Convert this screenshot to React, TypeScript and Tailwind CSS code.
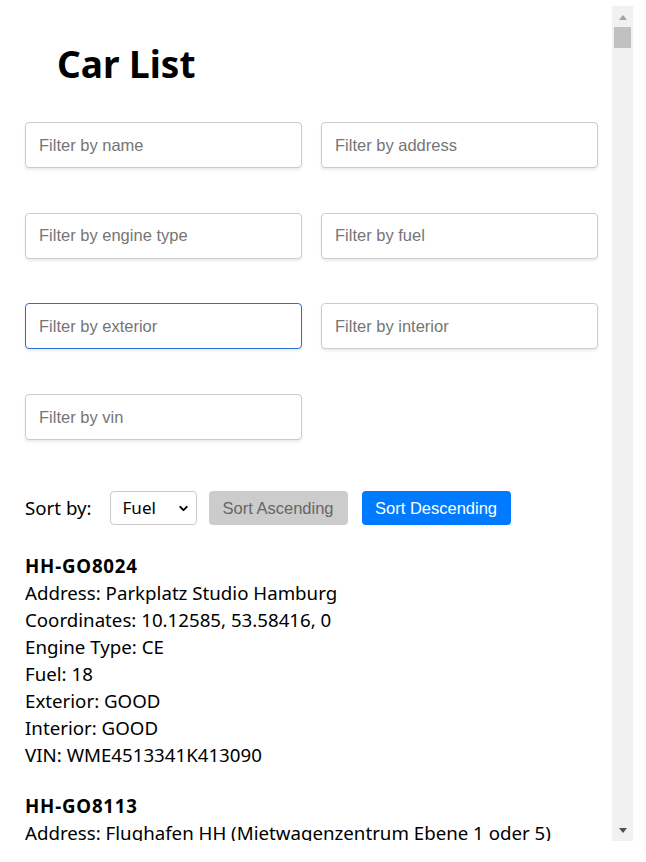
import { useState } from 'react';
import { ChevronDown } from 'lucide-react';

type Car = {
  name: string;
  address: string;
  coordinates: [number, number, number];
  engineType: string;
  fuel: number;
  exterior: string;
  interior: string;
  vin: string;
};

const firstCars: Car[] = [
  {
    name: 'HH-GO8024',
    address: 'Parkplatz Studio Hamburg',
    coordinates: [10.12585, 53.58416, 0],
    engineType: 'CE',
    fuel: 18,
    exterior: 'GOOD',
    interior: 'GOOD',
    vin: 'WME4513341K413090',
  },
  {
    name: 'HH-GO8113',
    address: 'Flughafen HH (Mietwagenzentrum Ebene 1 oder 5)',
    coordinates: [9.99622, 53.63264, 0],
    engineType: 'CE',
    fuel: 17,
    exterior: 'GOOD',
    interior: 'GOOD',
    vin: 'WME4513341K412880',
  },
];

const streets = ['Lesserstraße', 'Grosse Reichenstraße', 'Spitalerstraße', 'Bramfelder Chaussee', 'Wandsbeker Marktstraße', 'Eppendorfer Weg'];

// filler so the list scrolls like the real one
const moreCars: Car[] = Array.from({ length: 129 }, (_, i) => ({
  name: `HH-GO${8200 + i * 7}`,
  address: `${streets[i % streets.length]} ${(i % 90) + 1}, 22${(100 + i) % 999} Hamburg`,
  coordinates: [9.9 + (i % 30) / 100, 53.5 + (i % 20) / 100, 0],
  engineType: 'CE',
  fuel: Math.max(1, 16 - (i % 16)),
  exterior: i % 5 === 0 ? 'UNACCEPTABLE' : 'GOOD',
  interior: i % 7 === 0 ? 'UNACCEPTABLE' : 'GOOD',
  vin: `WME45133${41000 + i}K4${13000 + i}`,
}));

const cars = [...firstCars, ...moreCars];

const filters = ['name', 'address', 'engine type', 'fuel', 'exterior', 'interior', 'vin'];

export default function App() {
  const [sortKey, setSortKey] = useState('fuel');

  return (
    <div className="h-[862px] bg-white">
      <div className="relative mt-[6px] h-[835px] w-[633px]">
        <div className="h-full w-full overflow-y-auto pr-[21px] font-['Noto_Sans',sans-serif] text-black">
          <h1 className="mt-[36px] pl-[57px] text-[37px] font-bold leading-[44px]">Car List</h1>

          <div className="mt-[36px] grid grid-cols-[277px_277px] gap-x-[19px] gap-y-[44.7px] pl-[25px]">
            {filters.map((f) => (
              <input
                key={f}
                placeholder={`Filter by ${f}`}
                className={`h-[46px] w-full rounded-[4px] border bg-white px-[13px] font-['Liberation_Sans',Arial,sans-serif] text-[16.5px] shadow-[0_2px_3px_rgba(0,0,0,0.08)] outline-none placeholder:text-[#757575] ${
                  f === 'exterior' ? 'border-[#2a6fd6]' : 'border-[#cccccc]'
                }`}
              />
            ))}
          </div>

          <div className="mt-[51px] flex h-[34px] items-center pl-[25px]">
            <span className="mr-[18px] text-[18.7px]">Sort by:</span>
            <div className="relative mr-[12px]">
              <select
                value={sortKey}
                onChange={(e) => setSortKey(e.target.value)}
                className="h-[34px] w-[87px] appearance-none rounded-[4px] border border-[#cccccc] bg-white pl-[12px] text-[17px] outline-none"
              >
                <option value="name">Name</option>
                <option value="fuel">Fuel</option>
                <option value="vin">VIN</option>
              </select>
              <ChevronDown className="pointer-events-none absolute right-[7px] top-[11px] h-[13px] w-[13px]" strokeWidth={3.5} />
            </div>
            <button className="mr-[14px] h-[34px] w-[139px] rounded-[4px] bg-[#cccccc] font-['Liberation_Sans',Arial,sans-serif] text-[16.5px] text-[#666666]">
              Sort Ascending
            </button>
            <button className="h-[34px] w-[149px] rounded-[4px] bg-[#007bff] font-['Liberation_Sans',Arial,sans-serif] text-[16.5px] text-white">
              Sort Descending
            </button>
          </div>

          <div className="mt-[27px] pl-[25px] text-[18.7px] leading-[27px]">
            {cars.map((car) => (
              <div key={car.name} className="mb-6">
                <div className="font-bold tracking-[0.8px]">{car.name}</div>
                <div>Address: {car.address}</div>
                <div>Coordinates: {car.coordinates.join(', ')}</div>
                <div>Engine Type: {car.engineType}</div>
                <div>Fuel: {car.fuel}</div>
                <div>Exterior: {car.exterior}</div>
                <div>Interior: {car.interior}</div>
                <div>VIN: {car.vin}</div>
              </div>
            ))}
          </div>
        </div>

        {/* scrollbar, drawn over the list's right edge */}
        <div className="pointer-events-none absolute left-[612px] top-0 h-full w-[21px] bg-[#f1f1f1]">
          <div className="absolute left-[7px] top-[9px] h-0 w-0 border-x-[4px] border-b-[5px] border-x-transparent border-b-[#a3a3a3]" />
          <div className="absolute left-[2px] top-[21px] h-[21px] w-[17px] bg-[#c1c1c1]" />
          <div className="absolute left-[7px] top-[822px] h-0 w-0 border-x-[4px] border-t-[5px] border-x-transparent border-t-[#505050]" />
        </div>
      </div>
    </div>
  );
}
